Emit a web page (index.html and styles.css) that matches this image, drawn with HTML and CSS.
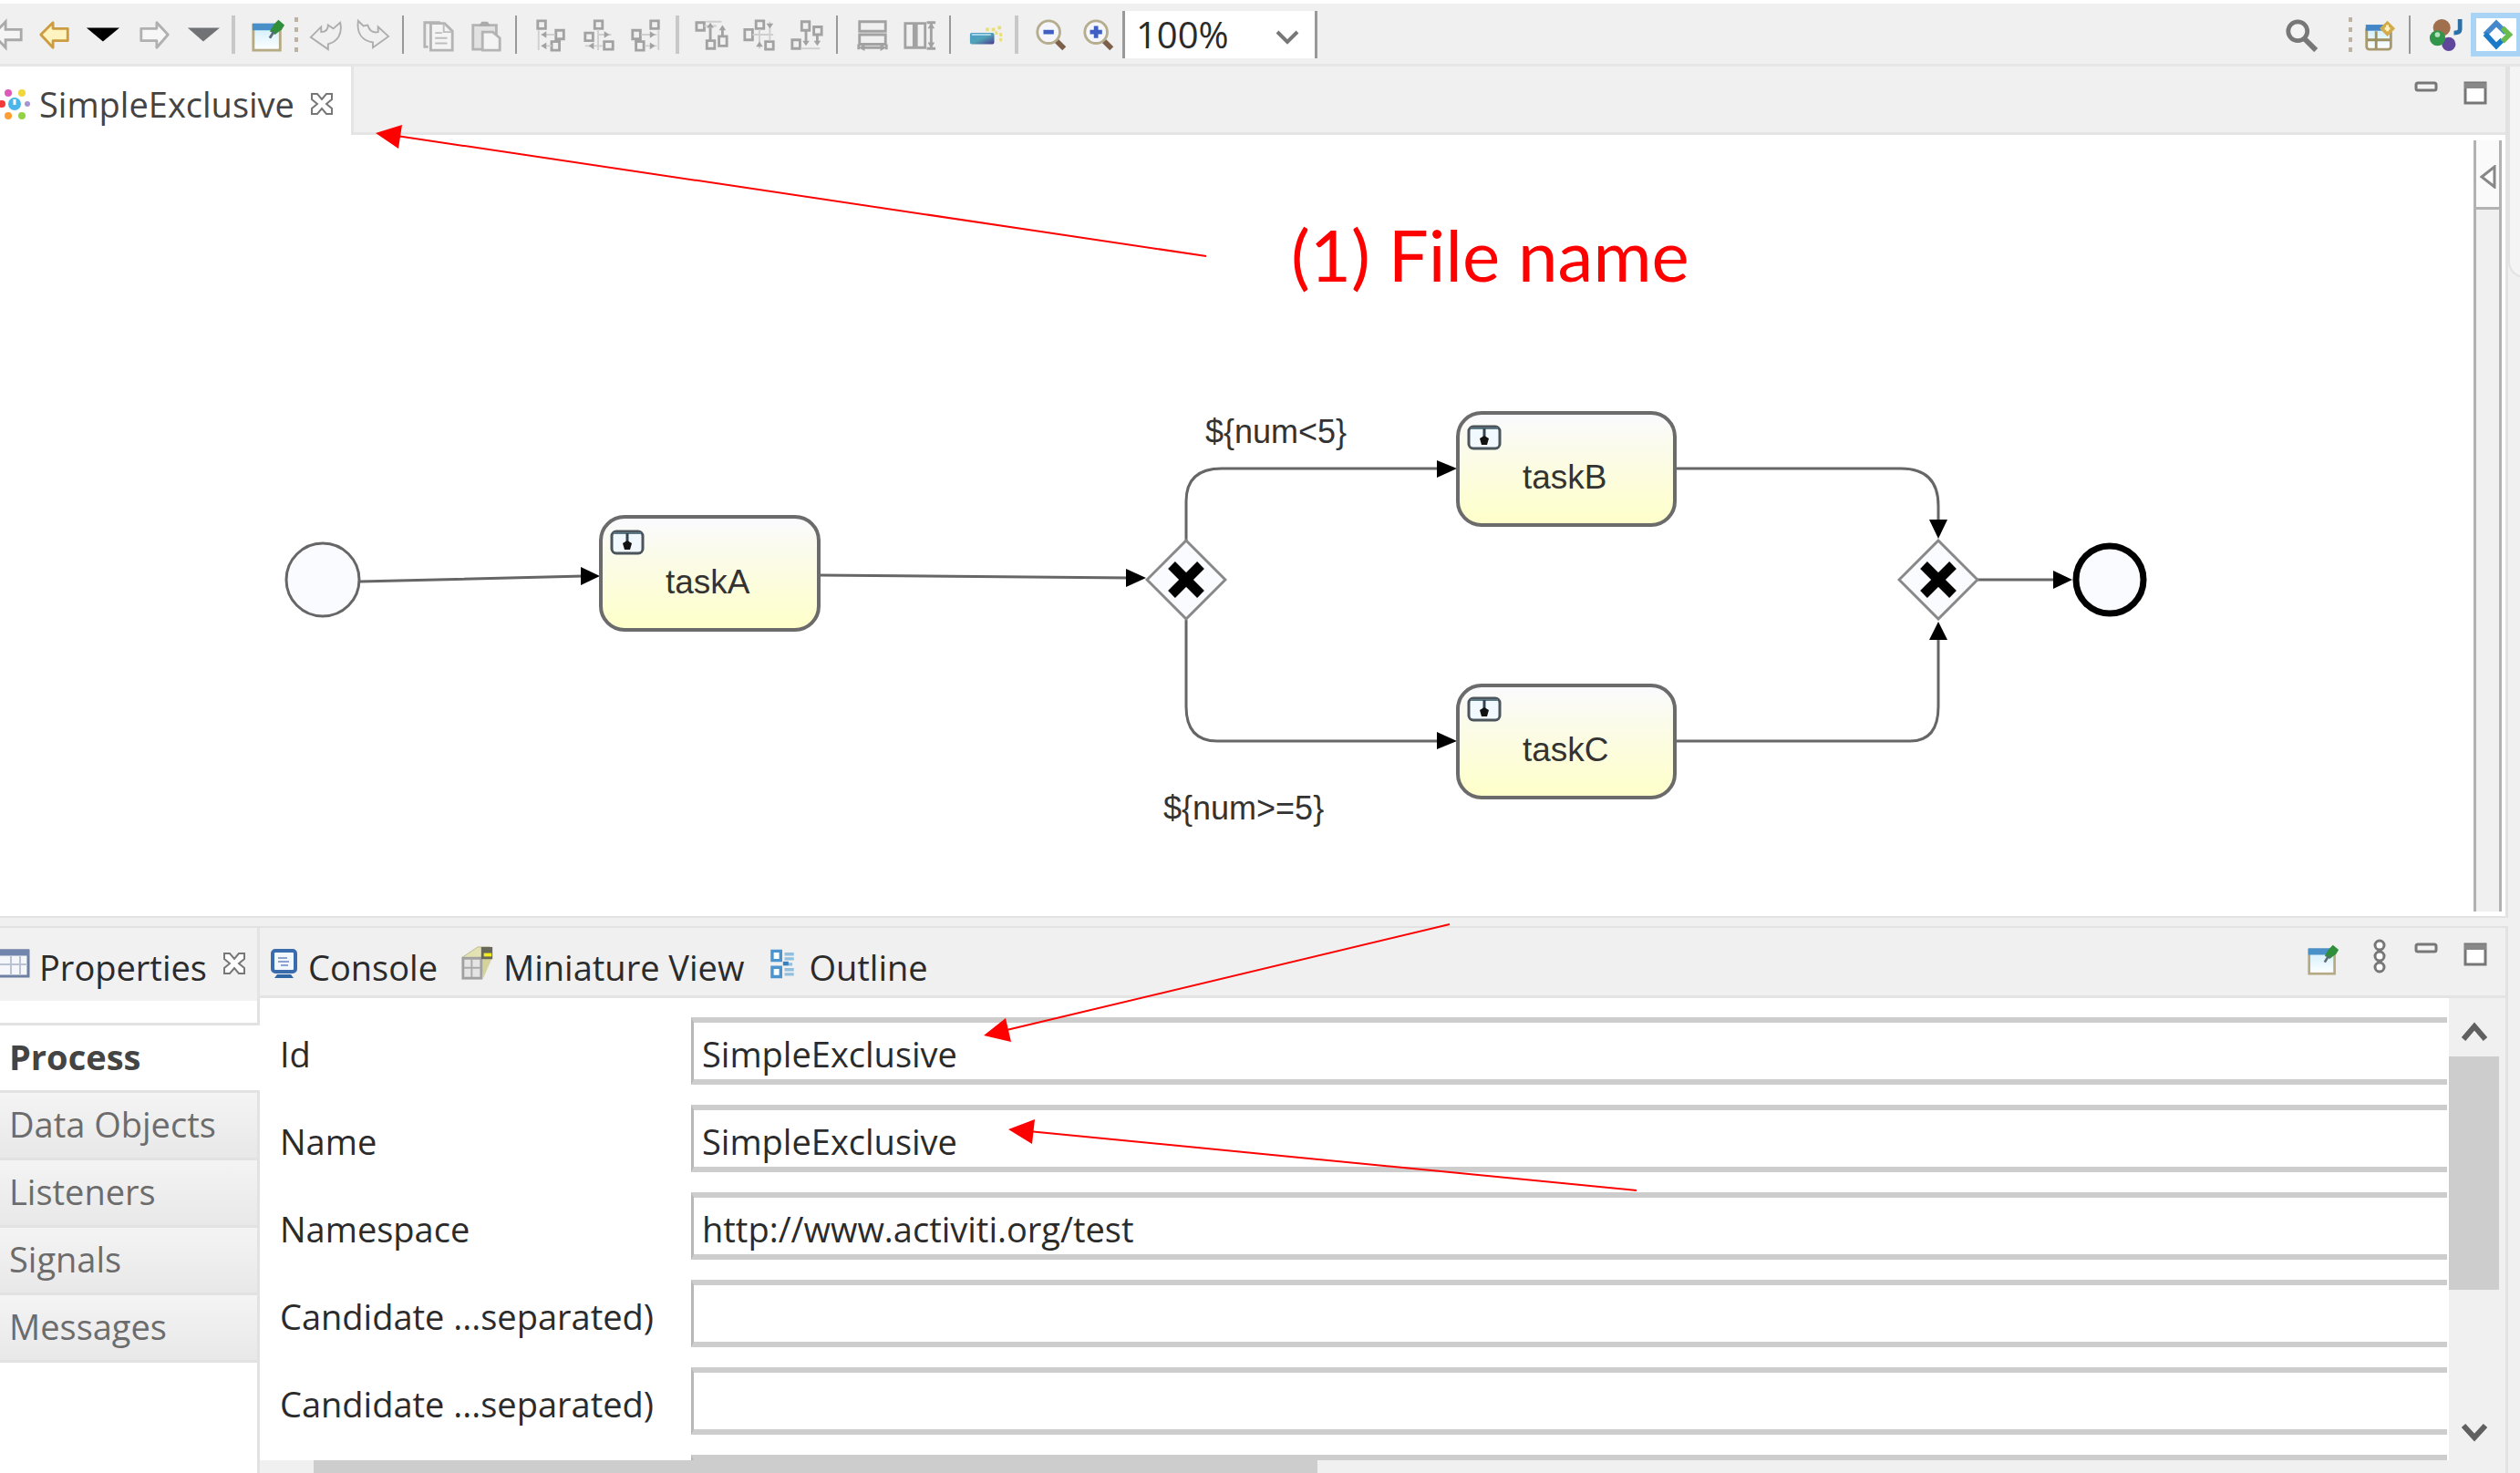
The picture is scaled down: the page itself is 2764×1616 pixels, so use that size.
FILE: index.html
```html
<!DOCTYPE html>
<html lang="en">
<head>
<meta charset="utf-8">
<title>SimpleExclusive</title>
<link rel="stylesheet" href="styles.css">
</head>
<body>
<svg class="defs" aria-hidden="true">
  <defs>
    <linearGradient id="sky" x1="0" y1="0" x2="0" y2="1"><stop offset="0" stop-color="#cdeefc"/><stop offset="1" stop-color="#fff"/></linearGradient>
    <linearGradient id="task" x1="0" y1="0" x2="0" y2="1"><stop offset="0" stop-color="#fafaff"/><stop offset=".3" stop-color="#fbfbec"/><stop offset="1" stop-color="#feffc8"/></linearGradient>
    <linearGradient id="bar" x1="0" y1="0" x2="1" y2="1"><stop offset="0" stop-color="#4f9bd0"/><stop offset=".5" stop-color="#4fa3b5"/><stop offset="1" stop-color="#4a3a90"/></linearGradient>
    <symbol id="pin" viewBox="0 0 40 40">
      <rect x="3" y="9" width="31" height="29" fill="url(#sky)" stroke="#b5aa84" stroke-width="3"/>
      <rect x="2" y="7" width="28" height="8" fill="#4a90c8"/>
      <path d="M22 16l5-8 5-5 7 6-3 5-8 6z" fill="#2f8f3a"/><path d="M27 16l-5 8" stroke="#5d6b78" stroke-width="3"/>
    </symbol>
    <symbol id="close" viewBox="0 0 26 26">
      <path d="M2 2h6l5 6 5-6h6v6l-6 5 6 5v6h-6l-5-6-5 6H2v-6l6-5-6-5z" fill="#fff" stroke="#777" stroke-width="2"/>
    </symbol>
    <symbol id="glass" viewBox="0 0 40 40">
      <path d="M26 27l9 9" stroke="#7d6049" stroke-width="6"/><circle cx="17" cy="17" r="13" fill="#f4f6fb" stroke="#b5ad8d" stroke-width="3"/>
    </symbol>
    <symbol id="max" viewBox="0 0 26 26"><rect x="2" y="2" width="22" height="22" fill="#fff" stroke="#777" stroke-width="3"/><path d="M1 5h24" stroke="#888" stroke-width="6"/></symbol>
    <symbol id="min" viewBox="0 0 26 26"><rect x="2" y="2" width="22" height="8" rx="2" fill="#f4f4f4" stroke="#777" stroke-width="3"/></symbol>
    <symbol id="service" viewBox="0 0 38 28">
      <rect x="2" y="2" width="34" height="24" rx="5" fill="#f1f9fe" stroke="#4c555c" stroke-width="3"/>
      <path d="M4 4h30" stroke="#5d7986" stroke-width="2"/><path d="M19 4v10" stroke="#345" stroke-width="3"/><path d="M14 15l5-3 5 3-2 7h-6z" fill="#111"/>
    </symbol>
    <symbol id="gateway" viewBox="0 0 90 90">
      <path d="M45 2l43 43-43 43L2 45z" fill="#fafbff" stroke="#888" stroke-width="3"/>
      <path d="M29 29l32 32M61 29L29 61" stroke="#000" stroke-width="11"/>
    </symbol>
  </defs>
</svg>

<header class="toolbar" role="toolbar" aria-label="Main toolbar">
  <button class="tool first" aria-label="Previous edit"><svg viewBox="0 0 40 40"><path d="M4 20L18 5v9h18v12H18v9z" fill="#f5f5f5" stroke="#a9a9a9" stroke-width="3"/></svg></button>
  <button class="tool" aria-label="Back"><svg viewBox="0 0 40 40"><path d="M4 20L18 6v7h17v14H18v8z" fill="#fff3c0" stroke="#cc9c40" stroke-width="3" stroke-linejoin="round"/></svg></button>
  <button class="tool" aria-label="Back history"><svg viewBox="0 0 40 40"><path d="M2 12h38L21 28z" fill="#000"/></svg></button>
  <button class="tool gap" aria-label="Forward"><svg viewBox="0 0 40 40"><path d="M35 20L22 6v7H4v14h18v8z" fill="#f7f7f7" stroke="#b0b0b0" stroke-width="3" stroke-linejoin="round"/></svg></button>
  <button class="tool" aria-label="Forward history"><svg viewBox="0 0 40 40"><path d="M3 12h37L21 28z" fill="#707276"/></svg></button>
  <span class="sep wide"></span>
  <button class="tool" aria-label="Pin editor"><svg><use href="#pin"/></svg></button>
  <span class="grip"></span>
  <button class="tool" aria-label="Undo"><svg viewBox="0 0 40 40"><path d="M3 23L15 11v6c5 0 8-3 8-8l6 4 8-7c3 13-3 22-14 25v6z" fill="#f0f0f0" stroke="#adadad" stroke-width="2"/></svg></button>
  <button class="tool" aria-label="Redo"><svg viewBox="0 0 40 40"><path d="M38 22L26 11v6c-5 1-10-1-12-8L9 10 3 4c-2 15 5 23 17 25v6z" fill="#f0f0f0" stroke="#adadad" stroke-width="2"/></svg></button>
  <span class="sep"></span>
  <button class="tool" aria-label="Copy"><svg viewBox="0 0 40 40"><path d="M8 34H4V6h18" fill="none" stroke="#b4b4b4" stroke-width="3"/><path d="M11 7h16l9 9v22H11z" fill="#f4f4f4" stroke="#b4b4b4" stroke-width="3"/><path d="M26 7v10h9M16 18h8M16 24h14M16 30h14" fill="none" stroke="#bdbdbd" stroke-width="2"/></svg></button>
  <button class="tool" aria-label="Paste"><svg viewBox="0 0 40 40"><path d="M5 9h27v28H5z" fill="#e2e2e2" stroke="#b4b4b4" stroke-width="3"/><path d="M12 10l3-5h7l3 5z" fill="#aaa"/><path d="M16 17h12l8 7v14H16z" fill="#f4f4f4" stroke="#b4b4b4" stroke-width="3"/></svg></button>
  <span class="sep"></span>
  <button class="tool" aria-label="Align left"><svg class="align" viewBox="0 0 40 40"><path d="M4 4h9v9H4zM25 15h9v10h-9zM20 28h9v10h-9z"/><path class="dot" d="M5 15v23M8 20h16M8 33h12"/><path class="tip" d="M8 20l6-4v8zM8 33l6-4v8z"/></svg></button>
  <button class="tool" aria-label="Align centre"><svg class="align" viewBox="0 0 40 40"><path d="M15 4h9v9h-9zM4 18h9v9H4zM26 28h10v9H26z"/><path class="dot" d="M19 14v24M4 33h20M18 20h16"/><path class="tip" d="M8 33l6-4v8zM32 20l-6-4v8z"/></svg></button>
  <button class="tool" aria-label="Align right"><svg class="align" viewBox="0 0 40 40"><path d="M25 4h9v9h-9zM4 15h9v10H4zM8 28h9v10H8z"/><path class="dot" d="M34 15v23M14 20h18M18 33h14"/><path class="tip" d="M30 20l-6-4v8zM30 33l-6-4v8z"/></svg></button>
  <span class="sep wide"></span>
  <button class="tool" aria-label="Align top"><svg class="align" viewBox="0 0 40 40"><path d="M2 6h9v9H2zM14 27h9v9h-9zM28 22h9v11h-9zM18 12v15M32 12v10"/><path class="dot" d="M13 5h18M11 10h14"/><path class="tip" d="M18 6l-4 6h8zM32 9l-4 6h8z"/></svg></button>
  <button class="tool" aria-label="Align middle"><svg class="align" viewBox="0 0 40 40"><path d="M3 14h9v12H3zM16 4h9v9h-9zM27 28h9v9h-9z"/><path class="dot" d="M12 20h24M20 14v22M32 5v22"/><path class="tip" d="M20 28l-4 6h8zM32 13l-4-6h8z"/></svg></button>
  <button class="tool" aria-label="Align bottom"><svg class="align" viewBox="0 0 40 40"><path d="M14 5h9v10h-9zM28 11h9v9h-9zM3 26h9v10H3zM19 15v14M32 20v10"/><path class="dot" d="M13 36h22"/><path class="tip" d="M19 33l-4-6h8zM32 33l-4-6h8z"/></svg></button>
  <span class="sep"></span>
  <button class="tool" aria-label="Match width"><svg class="align" viewBox="0 0 40 40"><path d="M5 5h30v11H5zM5 20h30v11H5zM7 35h26M4 31v6M36 31v6"/><path class="tip" d="M4 35l7-4v8zM36 35l-7-4v8z"/></svg></button>
  <button class="tool" aria-label="Match height"><svg class="align" viewBox="0 0 40 40"><path d="M3 7h10v28H3zM16 7h10v28H16zM33 7v28M28 6h10M28 36h10"/><path class="tip" d="M33 6l-4 7h8zM33 36l-4-7h8z"/></svg></button>
  <span class="sep"></span>
  <button class="tool" aria-label="Export diagram"><svg viewBox="0 0 40 40"><rect x="2" y="18" width="28" height="13" rx="2" fill="url(#bar)"/><path d="M4 20h22" stroke="#a9d5e8" stroke-width="2"/><path d="M20 14h4M27 14h4M34 12h4M31 18h3M36 20h3M36 26h3" stroke="#e9df7a" stroke-width="4"/></svg></button>
  <span class="sep wide"></span>
  <button class="tool" aria-label="Zoom out"><svg viewBox="0 0 40 40"><use href="#glass"/><path d="M11 17h12" stroke="#3f5fc4" stroke-width="5"/></svg></button>
  <button class="tool" aria-label="Zoom in"><svg viewBox="0 0 40 40"><use href="#glass"/><path d="M10 17h14M17 10v14" stroke="#3f5fc4" stroke-width="5"/></svg></button>
  <div class="zoom">
    <select aria-label="Zoom level"><option>100%</option></select>
    <svg class="zoom-arrow" viewBox="0 0 28 18"><path d="M3 3l11 11L25 3" fill="none" stroke="#777" stroke-width="4"/></svg>
  </div>
  <div class="perspectives">
    <button class="tool search" aria-label="Search"><svg viewBox="0 0 40 40"><circle cx="15" cy="16" r="11" fill="#f4f4f4" stroke="#777" stroke-width="5"/><path d="M23 25l13 13" stroke="#777" stroke-width="6"/></svg></button>
    <span class="grip"></span>
    <button class="tool" aria-label="Open perspective"><svg viewBox="0 0 40 40"><rect x="5" y="11" width="28" height="26" rx="3" fill="url(#sky)" stroke="#a89a6e" stroke-width="3"/><path d="M4 12h24" stroke="#4386c8" stroke-width="7"/><path d="M16 16v20M6 26h26" stroke="#9c905f" stroke-width="3"/><path d="M29 4l9 9-9 9-9-9z" fill="#d2ac4c"/><path d="M29 9v7M26 13h6" stroke="#fff3c0" stroke-width="3"/></svg></button>
    <span class="sep"></span>
    <button class="tool java" aria-label="Java"><svg viewBox="0 0 40 40"><circle cx="16" cy="12" r="10" fill="#a06f4e"/><path d="M37 2v12q0 4-7 4" fill="none" stroke="#2d70a8" stroke-width="5"/><circle cx="24" cy="31" r="8" fill="#60479c"/><circle cx="11" cy="24" r="9" fill="#31954a"/><circle cx="11" cy="20" r="3" fill="#b5e0bd"/></svg></button>
    <button class="tool active" aria-label="Activiti" aria-pressed="true"><svg viewBox="0 0 40 40"><path d="M31 18L20 7 7 20" fill="none" stroke="#4588cc" stroke-width="6"/><path d="M7 19l13 14 7-7" fill="none" stroke="#1c7bc8" stroke-width="6"/><path d="M27 12l8 8-8 8" fill="none" stroke="#69bb4d" stroke-width="6"/></svg></button>
  </div>
</header>

<div class="workbench">
  <div class="stack">
    <section class="editor" aria-label="Editor">
      <div class="tabbar">
        <div class="tab open">
          <svg class="tab-icon" viewBox="0 0 34 34"><circle cx="16" cy="17" r="7" fill="#4cb6ea"/><path d="M16 12v6" stroke="#fff" stroke-width="3"/><circle cx="9" cy="5" r="4" fill="#dc5bb8"/><circle cx="24" cy="5" r="4" fill="#efd73c"/><circle cx="2" cy="17" r="4" fill="#f23a3a"/><circle cx="30" cy="17" r="3" fill="#a594d4"/><circle cx="9" cy="30" r="4" fill="#ff9e30"/><circle cx="24" cy="30" r="4" fill="#93d244"/></svg>
          <span>SimpleExclusive</span>
          <button class="close" aria-label="Close"><svg><use href="#close"/></svg></button>
        </div>
        <div class="strip">
          <button class="view-tool" aria-label="Minimize"><svg><use href="#min"/></svg></button>
          <button class="view-tool" aria-label="Maximize"><svg><use href="#max"/></svg></button>
        </div>
      </div>
      <div class="canvas-area">
        <svg class="diagram" viewBox="0 148 2700 856" width="2700" height="856">
          <g class="flow">
            <path d="M395 638L640 632M899 631L1240 634M1301 594V550Q1301 514 1340 514H1580M1301 680V775Q1301 813 1335 813H1580M1838 514H2085Q2126 514 2126 555V575M1838 813H2095Q2126 813 2126 775V698M2169 636H2255"/>
          </g>
          <path class="heads" d="M637 622L658 632L637 642zM1235 624L1257 634L1235 644zM1576 505L1598 514L1576 524zM1576 803L1598 813L1576 822zM2116 570H2136L2126 591zM2116 702H2136L2126 682zM2252 626L2273 636L2252 646z"/>
          <circle cx="354" cy="636" r="40" class="event"/>
          <circle cx="2314" cy="636" r="37" class="event end"/>
          <g class="task">
            <rect x="659" y="567" width="239" height="124" rx="26"/>
            <rect x="1599" y="453" width="238" height="123" rx="26"/>
            <rect x="1599" y="752" width="238" height="123" rx="26"/>
          </g>
          <use href="#service" x="669" y="581" width="38" height="28"/>
          <use href="#service" x="1609" y="466" width="38" height="28"/>
          <use href="#service" x="1609" y="764" width="38" height="28"/>
          <use href="#gateway" x="1256" y="591" width="90" height="90"/>
          <use href="#gateway" x="2081" y="591" width="90" height="90"/>
          <g class="caption">
            <text x="730" y="651">taskA</text>
            <text x="1670" y="536">taskB</text>
            <text x="1670" y="835">taskC</text>
          </g>
          <g class="caption condition">
            <text x="1322" y="486">${num&lt;5}</text>
            <text x="1276" y="899">${num&gt;=5}</text>
          </g>
        </svg>
        <div class="palette">
          <button class="palette-toggle" aria-label="Show palette"><svg viewBox="0 0 20 26"><path d="M17 2v22L3 13z" fill="#fff" stroke="#888" stroke-width="3"/></svg></button>
        </div>
      </div>
    </section>

    <section class="views" aria-label="Views">
      <div class="tabbar lower">
        <div class="tab current">
          <svg class="tab-icon" viewBox="0 0 34 34"><rect x="-6" y="3" width="37" height="28" fill="#f4f6fa" stroke="#6d7fa3" stroke-width="3"/><path d="M-6 5h38" stroke="#7286ad" stroke-width="7"/><path d="M12 8v22M22 8v22M0 18h30" stroke="#b9c2d2" stroke-width="2"/></svg>
          <span>Properties</span>
          <button class="close" aria-label="Close"><svg><use href="#close"/></svg></button>
        </div>
        <div class="strip">
          <div class="tab idle">
            <svg class="tab-icon" viewBox="0 0 34 34"><rect x="4" y="3" width="25" height="23" rx="3" fill="#f2f6fd" stroke="#3a6bad" stroke-width="4"/><path d="M10 11h10M10 15h12M13 19h8" stroke="#8ca3d2" stroke-width="2"/><path d="M9 29h15l3 4H6z" fill="#2f66a5"/></svg>
            <span>Console</span>
          </div>
          <div class="tab idle mini">
            <svg class="tab-icon" viewBox="0 0 40 40"><path d="M2 13L20 1h14L23 13z" fill="#e3e2b5" stroke="#bcb98c"/><path d="M24 13L36 3v12L26 38z" fill="#d5d39c"/><rect x="3" y="14" width="21" height="23" fill="#e4e4e4" stroke="#a0a0a0" stroke-width="3"/><path d="M13 14v22M4 25h19" stroke="#aaa" stroke-width="2"/><rect x="24" y="1" width="13" height="14" fill="#67675a"/><path d="M27 10h9" stroke="#f3ed20" stroke-width="4"/></svg>
            <span>Miniature View</span>
          </div>
          <div class="tab idle outline">
            <svg class="tab-icon" viewBox="0 0 34 40"><path d="M4 4h11v12H4zM4 25h11v12H4z" fill="#fff" stroke="#4a94cf" stroke-width="4"/><path d="M20 8h12M20 14h12M18 21h12M20 28h12M20 34h12" stroke="#93bfdf" stroke-width="4"/><path d="M18 20h7" stroke="#377fbf" stroke-width="5"/></svg>
            <span>Outline</span>
          </div>
          <div class="view-tools">
            <button class="view-tool pin" aria-label="Pin view"><svg><use href="#pin"/></svg></button>
            <button class="view-tool dots" aria-label="View menu"><svg viewBox="0 0 16 38"><g fill="#fff" stroke="#777" stroke-width="3"><circle cx="8" cy="7" r="5"/><circle cx="8" cy="19" r="5"/><circle cx="8" cy="31" r="5"/></g></svg></button>
            <button class="view-tool" aria-label="Minimize"><svg><use href="#min"/></svg></button>
            <button class="view-tool" aria-label="Maximize"><svg><use href="#max"/></svg></button>
          </div>
        </div>
      </div>
      <div class="properties">
        <nav class="sections" aria-label="Property sections">
          <button class="section chosen">Process</button>
          <button class="section">Data Objects</button>
          <button class="section">Listeners</button>
          <button class="section">Signals</button>
          <button class="section">Messages</button>
        </nav>
        <div class="sheet">
          <form class="form">
            <label for="f-id">Id</label><input id="f-id" type="text" value="SimpleExclusive">
            <label for="f-name">Name</label><input id="f-name" type="text" value="SimpleExclusive">
            <label for="f-ns">Namespace</label><input id="f-ns" type="text" value="http://www.activiti.org/test">
            <label for="f-users">Candidate ...separated)</label><input id="f-users" type="text">
            <label for="f-groups">Candidate ...separated)</label><input id="f-groups" type="text">
            <span></span><input type="text" aria-label="Documentation">
          </form>
          <div class="hscroll"><div class="hthumb"></div></div>
        </div>
        <div class="vscroll">
          <svg class="chevron" viewBox="0 0 28 24"><path d="M2 20L14 6l12 14" fill="none" stroke="#606060" stroke-width="6"/></svg>
          <div class="vthumb"></div>
          <svg class="chevron last" viewBox="0 0 28 24"><path d="M2 4l12 13L26 4" fill="none" stroke="#606060" stroke-width="6"/></svg>
        </div>
      </div>
    </section>
  </div>
  <aside class="edge"><div class="edge-panel"></div></aside>
</div>

<svg class="notes" viewBox="0 0 2764 1616" width="2764" height="1616">
  <path class="lines" d="M435 149L1323 281M1100 1131L1590 1014M1128 1241L1795 1306"/>
  <path class="points" d="M412 146L441 137L437 163zM1079 1136L1103 1117L1109 1143zM1106 1239L1135 1228L1132 1255z"/>
  <text x="1416" y="309">(1) File name</text>
</svg>
</body>
</html>
```
FILE: styles.css
```css
* { box-sizing: border-box; }

body {
  margin: 0;
  padding-top: 4px;
  height: 100vh;
  overflow: hidden;
  position: relative;
  display: flex;
  flex-direction: column;
  background: #fff;
  color: #2b2b2b;
  font: 38px/50px "Open Sans", "Noto Sans", sans-serif;
}

button { padding: 0; border: 0; background: none; font: inherit; color: inherit; }
svg { display: block; }
.defs { position: absolute; width: 0; height: 0; }

/* Toolbar */
.toolbar {
  flex: none;
  display: flex;
  align-items: center;
  height: 69px;
  padding-top: 2px;
  background: #f0f0f0;
  border-bottom: 3px solid #e6e6e6;
}
.tool { flex: none; width: 52px; height: 48px; display: flex; align-items: center; justify-content: center; }
.tool svg { width: 38px; height: 38px; }
.tool.first { margin-left: -18px; }
.tool.gap { margin-left: 6px; }
.sep { flex: none; width: 2px; height: 42px; margin: 0 12px 0 6px; background: #999; }
.sep.wide { width: 4px; margin-right: 10px; background: #c8c8c8; }
.grip {
  flex: none;
  width: 4px;
  height: 38px;
  margin: 0 4px 0 3px;
  background: repeating-linear-gradient(#bdb3a5 0 5px, transparent 5px 11px);
}
.align { fill: none; stroke: #a2a2a2; stroke-width: 3px; }
.align .dot { stroke: #cfcfcf; stroke-width: 2px; }
.align .tip { fill: #a2a2a2; stroke: none; }

.zoom { position: relative; flex: none; width: 214px; height: 52px; border: solid #999; border-width: 0 3px; background: #fff; }
.zoom select { width: 100%; height: 100%; padding: 0 0 0 12px; border: 0; appearance: none; background: transparent; font: inherit; font-size: 40px; color: inherit; }
.zoom-arrow { position: absolute; right: 16px; top: 20px; width: 28px; height: 18px; pointer-events: none; }

.perspectives { margin-left: auto; display: flex; align-items: center; }
.search { margin-right: 22px; }
.java { margin-right: 2px; }
.tool.active { width: 54px; border: 6px solid #a9d4f5; border-right-width: 4px; background: #fff; }

/* Workbench */
.workbench { flex: 1; min-height: 0; display: flex; background: #f0f0f0; }
.stack { flex: 1; min-width: 0; display: flex; flex-direction: column; gap: 9px; }
.edge { flex: none; width: 13px; overflow: hidden; }
.edge-panel { width: 40px; height: 232px; background: #f4f4f4; border: 2px solid #e2e2e2; border-top: 0; border-radius: 0 0 0 18px; }

.editor, .views { display: flex; flex-direction: column; border-right: 3px solid #e2e2e2; min-height: 0; }
.editor { flex: 1; background: #fff; border-bottom: 2px solid #e2e2e2; }
.views { flex: none; height: 600px; border-top: 2px solid #e2e2e2; }

.tabbar { flex: none; display: flex; height: 75px; }
.tab { display: flex; align-items: center; gap: 9px; white-space: nowrap; }
.tab-icon { flex: none; width: 34px; height: 34px; }
.strip { flex: 1; display: flex; background: #f0f0f0; border-bottom: 3px solid #e4e4e4; }
.tab.open { width: 388px; padding-top: 6px; background: #fff; border-right: 3px solid #e4e4e4; color: #444; }
.close { margin-left: 8px; width: 26px; height: 26px; }
.close svg { width: 26px; height: 26px; }
.editor .strip { justify-content: flex-end; padding: 16px 20px 0 0; gap: 28px; }
.view-tool { width: 26px; height: 26px; }
.view-tool svg { width: 26px; height: 26px; }

.lower { height: 77px; }
.tab.current { width: 285px; background: #f1f1f1; border-right: 3px solid #e4e4e4; }
.lower .tab span { padding-top: 8px; }
.tab.idle { padding: 4px 0 0 10px; gap: 9px; }
.tab.outline { gap: 12px; }
.lower .strip { gap: 15px; }
.tab.mini .tab-icon { width: 38px; height: 38px; }
.view-tools { margin-left: auto; display: flex; padding: 16px 20px 0 0; gap: 28px; }
.view-tool.pin { margin-right: 6px; }
.view-tool.pin, .view-tool.pin svg { width: 40px; height: 36px; }
.view-tool.dots { margin: -4px 2px 0 0; }
.view-tool.dots, .view-tool.dots svg { width: 16px; height: 38px; }

/* Diagram */
.canvas-area { flex: 1; min-height: 0; display: flex; justify-content: space-between; overflow: hidden; padding: 0 4px 5px 0; }
.diagram { flex: none; }
.flow path { fill: none; stroke: #666; stroke-width: 3px; }
.event { fill: #fafbff; stroke: #666; stroke-width: 3px; }
.event.end { stroke: #000; stroke-width: 7px; }
.task rect { fill: url(#task); stroke: #6b6b6b; stroke-width: 4px; }
.caption { font: 37px "Liberation Sans", Arial, sans-serif; fill: #333; }
.condition { font-size: 36px; }
.palette { flex: none; width: 31px; margin-top: 6px; border: solid #b2b2b2; border-width: 0 3px; background: #f0f0f0; }
.palette-toggle { display: flex; align-items: center; justify-content: center; width: 100%; height: 76px; padding-top: 6px; background: #fafafa; border-bottom: 3px solid #b2b2b2; }
.palette-toggle svg { width: 20px; height: 26px; }

/* Properties */
.properties { flex: 1; min-height: 0; display: flex; background: #fff; }
.sections { flex: none; width: 285px; padding-top: 27px; background: linear-gradient(#f1f1f1 3px, #fff 3px); border-right: 3px solid #e2e2e2; }
.section { display: block; width: 100%; height: 74px; padding: 0 0 4px 10px; text-align: left; color: #6c6c6c; background: linear-gradient(#f4f4f4, #e8e8e8); border-top: 3px solid #e2e2e2; }
.section:last-child { height: 77px; border-bottom: 3px solid #e2e2e2; }
.section.chosen { width: 285px; background: #fff; color: #444; font-weight: 700; }
.sheet { flex: 1; min-width: 0; display: flex; flex-direction: column; }
.form { flex: 1; min-height: 0; overflow: hidden; display: grid; grid-template-columns: 451px 1fr; grid-auto-rows: 74px; row-gap: 22px; align-items: center; padding: 21px 2px 0 22px; }
.form label { padding-top: 6px; }
.form input { width: 100%; height: 74px; padding: 5px 0 0 9px; border: solid #cdcdcd; border-width: 6px 0 6px 3px; border-left-color: #b8b8b8; border-radius: 0; outline: 0; background: #fff; font: inherit; color: inherit; }
.hscroll { flex: none; height: 14px; padding-left: 59px; background: #f0f0f0; }
.hthumb { width: 47%; height: 14px; background: #cdcdcd; }
.vscroll { flex: none; width: 62px; padding: 25px 7px 32px 0; display: flex; flex-direction: column; align-items: center; background: #f0f0f0; }
.chevron { flex: none; width: 28px; height: 24px; }
.vthumb { width: 100%; height: 256px; margin-top: 15px; background: #cdcdcd; }
.chevron.last { margin-top: auto; }

/* Callouts drawn over the workbench */
.notes { position: absolute; left: 0; top: 0; pointer-events: none; }
.notes text { font: 78px Lato, sans-serif; fill: #f00; }
.lines { stroke: #f00; stroke-width: 2px; fill: none; }
.points { fill: #f00; }
```
